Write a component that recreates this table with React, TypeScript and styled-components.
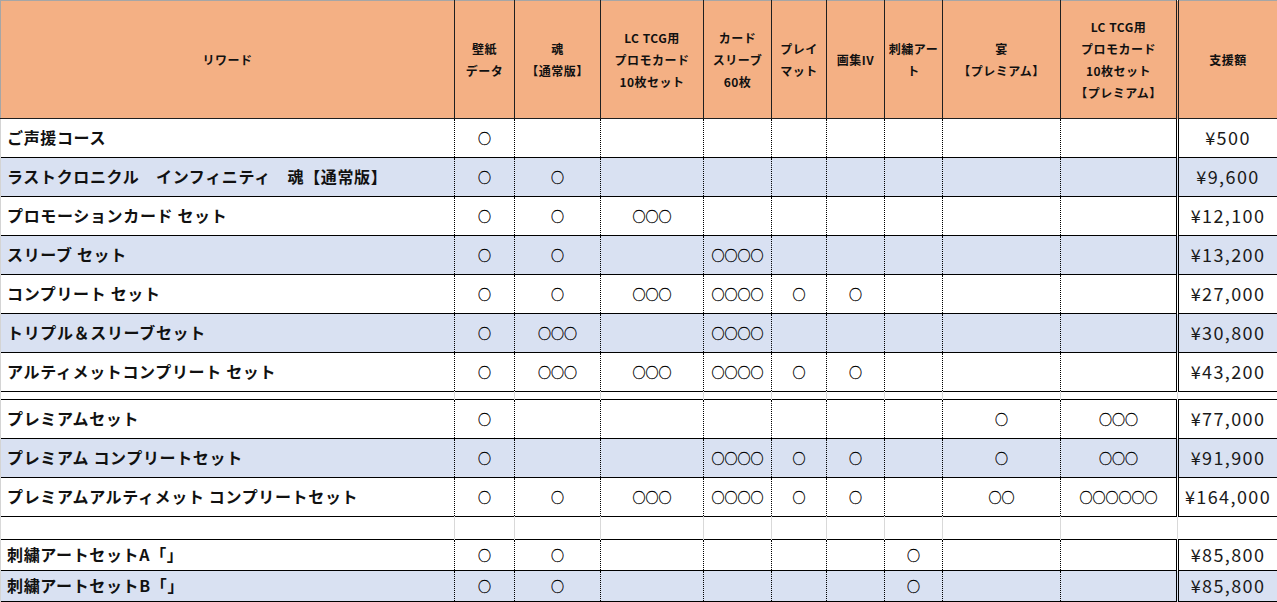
import React from "react";
import styled, { createGlobalStyle } from "styled-components";

const GlobalStyle = createGlobalStyle`
  html, body {
    margin: 0;
    padding: 0;
    background: #fff;
  }
  body {
    font-family: "Noto Sans CJK JP", "Noto Sans", sans-serif;
    color: #000;
  }
`;

const Sheet = styled.table`
  width: 1277px;
  table-layout: fixed;
  border-collapse: collapse;
`;

const HeadRow = styled.tr`
  height: 118px;
`;

const HeadCell = styled.th`
  padding: 0 2px;
  background: #f4b084;
  border: 1px solid #1f1f1f;
  border-top-color: #a6a6a6;
  font-size: 12px;
  line-height: 22px;
  font-weight: 700;
  letter-spacing: 0.5px;
  color: #111;
  text-align: center;
  vertical-align: middle;
  white-space: nowrap;

  &:first-child {
    border-left-color: #a6a6a6;
  }
  &:last-child {
    border-left: 3px double #1f1f1f;
  }
`;

const Row = styled.tr<{ $h: number; $tint: boolean }>`
  height: ${({ $h }) => $h}px;
  background: ${({ $tint }) => ($tint ? "#d9e1f2" : "#fff")};
  border-top: 1px solid #000;
  border-bottom: 1px solid #000;
`;

const NameCell = styled.td`
  padding: 0 0 2px 6px;
  font-size: 16px;
  font-weight: 700;
  letter-spacing: 0.65px;
  color: #111;
  white-space: nowrap;
  border-left: 1px solid #d4d4d4;
  border-right: 1px dotted #000;
`;

const MarkCell = styled.td`
  padding: 0 0 2px;
  text-align: center;
  font-size: 13px;
  color: #000;
  -webkit-text-stroke: 0.3px #000;
  white-space: nowrap;
  border-right: 1px dotted #000;
`;

const PriceCell = styled.td`
  padding: 0 0 2px;
  text-align: center;
  font-size: 18px;
  font-weight: 400;
  letter-spacing: 1.4px;
  color: #1a1a1a;
  white-space: nowrap;
  border-left: 3px double #000;
  border-right: 1px solid #000;
`;

const SpacerRow = styled.tr<{ $h: number }>`
  height: ${({ $h }) => $h}px;
  background: #fff;
  border-top: 1px solid #000;
  border-bottom: 1px solid #000;
`;

const SpacerCell = styled.td`
  padding: 0;
  border-left: 1px solid #d9d9d9;
  border-right: 1px solid #d9d9d9;
`;

const widths = [454, 60, 86, 103, 68, 55, 58, 58, 118, 117, 100];

const headers: string[][] = [
  ["リワード"],
  ["壁紙", "データ"],
  ["魂", "【通常版】"],
  ["LC TCG用", "プロモカード", "10枚セット"],
  ["カード", "スリーブ", "60枚"],
  ["プレイ", "マット"],
  ["画集IV"],
  ["刺繍アー", "ト"],
  ["宴", "【プレミアム】"],
  ["LC TCG用", "プロモカード", "10枚セット", "【プレミアム】"],
  ["支援額"],
];

type Reward = { name: string; marks: string[]; price: string };
type Block = { rows: Reward[]; rowHeight: number; gapAfter?: number };

const o = (n: number) => "○".repeat(n);

const blocks: Block[] = [
  {
    rowHeight: 39,
    gapAfter: 8,
    rows: [
      { name: "ご声援コース", marks: [o(1)], price: "¥500" },
      { name: "ラストクロニクル　インフィニティ　魂【通常版】", marks: [o(1), o(1)], price: "¥9,600" },
      { name: "プロモーションカード セット", marks: [o(1), o(1), o(3)], price: "¥12,100" },
      { name: "スリーブ セット", marks: [o(1), o(1), "", o(4)], price: "¥13,200" },
      { name: "コンプリート セット", marks: [o(1), o(1), o(3), o(4), o(1), o(1)], price: "¥27,000" },
      { name: "トリプル＆スリーブセット", marks: [o(1), o(3), "", o(4)], price: "¥30,800" },
      { name: "アルティメットコンプリート セット", marks: [o(1), o(3), o(3), o(4), o(1), o(1)], price: "¥43,200" },
    ],
  },
  {
    rowHeight: 39,
    gapAfter: 23,
    rows: [
      { name: "プレミアムセット", marks: [o(1), "", "", "", "", "", "", o(1), o(3)], price: "¥77,000" },
      { name: "プレミアム コンプリートセット", marks: [o(1), "", "", o(4), o(1), o(1), "", o(1), o(3)], price: "¥91,900" },
      { name: "プレミアムアルティメット コンプリートセット", marks: [o(1), o(1), o(3), o(4), o(1), o(1), "", o(2), o(6)], price: "¥164,000" },
    ],
  },
  {
    rowHeight: 31,
    rows: [
      { name: "刺繍アートセットA「」", marks: [o(1), o(1), "", "", "", "", o(1)], price: "¥85,800" },
      { name: "刺繍アートセットB「」", marks: [o(1), o(1), "", "", "", "", o(1)], price: "¥85,800" },
    ],
  },
];

const markColumns = widths.length - 2;

const App: React.FC = () => {
  return (
    <>
      <GlobalStyle />
      <Sheet>
        <colgroup>
          {widths.map((w, i) => (
            <col key={i} style={{ width: w }} />
          ))}
        </colgroup>
        <thead>
          <HeadRow>
            {headers.map((lines, i) => (
              <HeadCell key={i}>
                {lines.map((line, j) => (
                  <div key={j}>{line}</div>
                ))}
              </HeadCell>
            ))}
          </HeadRow>
        </thead>
        <tbody>
          {blocks.map((block, b) => (
            <React.Fragment key={b}>
              {block.rows.map((row, r) => (
                <Row key={r} $h={block.rowHeight} $tint={r % 2 === 1}>
                  <NameCell>{row.name}</NameCell>
                  {Array.from({ length: markColumns }, (_, c) => (
                    <MarkCell key={c}>{row.marks[c] ?? ""}</MarkCell>
                  ))}
                  <PriceCell>{row.price}</PriceCell>
                </Row>
              ))}
              {block.gapAfter !== undefined && (
                <SpacerRow $h={block.gapAfter}>
                  {widths.map((_, c) => (
                    <SpacerCell key={c} />
                  ))}
                </SpacerRow>
              )}
            </React.Fragment>
          ))}
        </tbody>
      </Sheet>
    </>
  );
};

export default App;
